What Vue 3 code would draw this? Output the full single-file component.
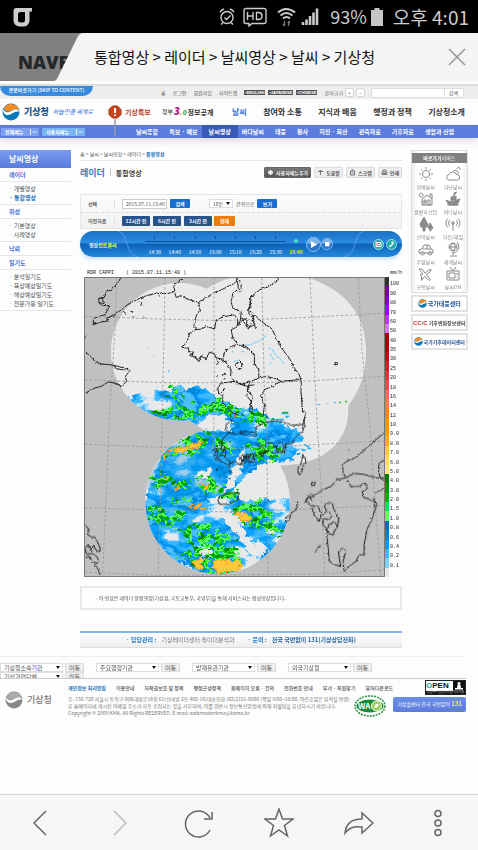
<script setup>
import { ref } from 'vue'

const observed = ref('2015.07.11.15:40')
const languages = ['ENGLISH', 'JAPANESE', 'CHINESE']
const utilities = ['홈', '로그인', '회원가입', '사이트맵']
const mainMenu = ['참여와 소통', '지식과 배움', '행정과 정책', '기상청소개']
const subMenu = ['날씨종합', '특보 · 예보', '날씨영상', '바다날씨', '태풍', '황사', '지진 · 화산', '관측자료', '기후자료', '생활과 산업']
const sideMenu = [
  { name: '레이더', items: ['개별영상', '통합영상'] },
  { name: '위성', items: ['기본영상', '사례영상'] },
  { name: '낙뢰', items: [] },
  { name: '일기도', items: ['분석일기도', '육상예상일기도', '해상예상일기도', '전문가용 일기도'] }
]
const crumbs = ['홈', '날씨', '날씨영상', '레이더']
const tools = [
  { name: '도움말', icon: 'M1 2.500h5M3.500 6V1M2 2.500 3.500 1 5 2.500' },
  { name: '스크랩', icon: 'M1.500 2h4v4h-4zM2.500 1h2v1M2.500 4h2' },
  { name: '인쇄', icon: 'M2 3V1h3v2M1 3h5v2.500H1zM2 4.500h3' }
]
const pastButtons = ['12시간 전', '6시간 전', '3시간 전']
const times = ['14:30', '14:40', '14:50', '15:00', '15:10', '15:20', '15:30', '15:40']
const services = [
  { name: '현재날씨', icon: 'M8 4.500a3.500 3.500 0 1 0 .1 0M8 1v2M8 13v2M1 8h2M13 8h2M3 3l1.500 1.500M11.500 11.500 13 13M3 13l1.500-1.500M11.500 4.500 13 3' },
  { name: '지난날씨', icon: 'M4 14a2.800 2.800 0 0 1 0-5.500 4 4 0 0 1 7.500 0 2.800 2.800 0 0 1 1 5.500zM8 5.500a2.500 2 0 0 1 4-.5 1.500 1.500 0 0 1 .5 2.800M12 3a1.500 1.500 0 1 1 2.500 1' },
  { name: '생활과산업', icon: 'M4 8l5-4 5 4v6H4zM6 9h2v2H6zM10 9h2v5h-2zM12 6V3h2v5M3 2a2 2 0 1 0 .1 0M4 11h5M4 13h5' },
  { name: '바다날씨', icon: 'M1 9l5 2 9-3-3 6H4zM6 10V6l5-1v4M9 5V2l3-1M2 14h12', fill: true },
  { name: '산악날씨', icon: 'M6 1 2 8l1 3h2v4h2v-4h2l1-2zM12 7l-2 4 1 2h1v2h1v-2l2-1z', fill: true },
  { name: '지진/해일', icon: 'M8 7v8M7 6h2v2H7zM5 4a4 4 0 0 0 0 6M11 4a4 4 0 0 1 0 6M3 2.500a6 6 0 0 0 0 9M13 2.500a6 6 0 0 1 0 9' },
  { name: '주말날씨', icon: 'M1 12V9l3-1 2-4h5l2 4 2 1v3zM5 8h8M9 4v4M4.500 10.500a1.800 1.800 0 1 0 .1 0M12 10.500a1.800 1.800 0 1 0 .1 0' },
  { name: '세계날씨', icon: 'M8 2a4 4 0 1 0 .1 0M4 6h8M8 2c-3 3-3 5 0 8M8 2c3 3 3 5 0 8M12 1c4 5 1 11-5 11M8 12v2M5 15h7' },
  { name: '공항날씨', icon: 'M1 3h3l3 4 4-3 2-.5-.5 2-4 3 4 5-1 1-5-4-3 4v-4L2 9l3-1z' },
  { name: '날씨ON', icon: 'M2 5h12v9H2zM4 7h6v5H4zM12 7v2M12 10.500v1M5 1l3 4 3-4' }
]
const banners = ['국가태풍센터', '기후변화정보센터', '국가기후데이터센터']
const scale = [
  ['#333', '100'], ['#7800aa', '90'], ['#8200d2', '80'], ['#a000ff', '70'], ['#b937ff', '60'], ['#d27dff', '50'],
  ['#aa0000', '40'], ['#b40000', '35'], ['#c80a14', '30'], ['#d21e28', '25'], ['#e1323c', '20'], ['#f04650', '18'],
  ['#ff6464', '16'], ['#ff7850', '14'], ['#ff8214', '12'], ['#ff9600', '10'], ['#ff9600', '9.0'], ['#ffaa1e', '8.0'],
  ['#ffc832', '7.0'], ['#ffdc50', '6.0'], ['#ffe678', '5.0'], ['#007800', '4.0'], ['#009600', '3.0'], ['#00b400', '2.0'],
  ['#00e65a', '1.5'], ['#5aff5a', '1.0'], ['#006eb4', '0.8'], ['#0082d2', '0.6'], ['#009bff', '0.4'], ['#3cb9ff', '0.2'],
  ['#78d2ff', '0.1'], ['#e8e8e8', '']
]
const agencies = ['기상청소속기관', '주요행정기관', '방재유관기관', '외국기상청', '기상과련단체']
const policies = ['이용안내', '저작권보호 및 정책', '행정근성정책', '홈페이지 오류 · 건의', '전화번호 안내', '부서 · 직원찾기', '뷰어다운로드']

/* Each map sheet keeps its own origin; its points are in thirds of a map unit. */
const coast = [
  { at: '75 266', lines: [
    '138,38 128,55 115,68 108,78 98,75 92,85 88,98 72,100 70,112 82,122 105,122 98,135 90,150 70,155 55,162 55,180 75,172 100,168 95,160 115,152 130,142 145,130 160,118 175,110 195,100 215,92 245,85 270,86 290,84 300,78 298,60 310,50 325,40',
    '300,84 305,98 318,92 330,98 345,105 372,112 390,100 400,95 420,82 440,75 465,62 480,55 490,40',
    '372,112 376,135 366,150 360,170 358,185 365,192 345,205 340,222 330,240 318,248 340,250 345,262 360,262 345,272 360,278 372,290 380,275 395,282 405,262 420,268 425,280 440,282 446,292 458,288',
    '358,195 380,193 395,185 420,192 425,165 450,155 480,150 490,165 488,185',
    '488,40 492,72 475,85 470,110 475,130 500,140 498,165 490,185 470,195 475,220 490,238',
    '540,92 525,100 528,120 520,135 535,145 540,180 528,186 515,182 518,165 500,160',
    '30,262 45,272 60,290 80,298 105,300 130,305 160,312 165,318 152,335 155,350 140,365 120,355 100,352 80,365 60,370 32,385',
    '115,303 125,312 160,318', '30,218 38,212', '70,102 82,98 86,115 72,114',
    '490,238 470,245 450,262 445,285 460,300 470,315 468,335 480,350 465,352 440,355 430,370 432,385 445,395 445,415 460,430 475,445 490,450',
    '490,238 510,248 530,258 540,270', '480,300 495,290 505,300 495,315 480,300', '480,350 500,360 520,365 540,360',
    '520,365 518,395 530,410 525,440 540,445', '192,110 202,116 198,123', '160,135 176,142', '207,156 209,158', '172,158 176,156', '148,142 154,146', '252,92 256,94',
    '424,333 428,335', '446,330 452,328', '448,345 452,340', '438,385 446,380 450,370', '425,300 432,294 428,288', '352,268 370,284 384,270'
  ] },
  { at: '240 266', lines: [
    '115,38 115,48 85,65 60,75 35,95 33,115 28,145 35,155 48,152 60,165 80,180 98,192 108,215 125,248 150,280 165,310 180,330 186,350 185,380 190,440 200,445 190,480',
    '0,180 10,163 18,180 27,193 40,165 46,180 48,192', '0,238 20,245 38,262 45,275 45,300 58,310 58,340 30,352 0,360',
    '58,340 80,335 110,342 125,350 180,345', '125,350 100,365 75,375 65,395 75,420 72,450 85,460',
    '30,352 25,375 38,395 35,420 40,435', '0,288 8,295 5,312 -5,312', '0,45 5,60 3,80', '287,294 293,292 296,298 289,301 287,294', '367,316 368,317'
  ] },
  { at: '75 420', lines: [
    '475,0 455,20 452,35 465,42 445,60 440,90 425,95 420,110 440,130 460,140 480,130 500,140 510,115 530,110',
    '465,42 485,48 510,38 540,42', '412,98 425,88 430,105 418,118 430,128', '430,70 450,85 445,105 432,115', '440,92 455,98 450,118', '455,120 468,132 460,150',
    '428,152 424,158', '462,155 470,165', '435,175 438,178', '495,115 505,130 520,110 526,130 540,112',
    '430,245 440,232 470,225 495,225 490,245 460,258 435,258 430,245',
    '30,320 40,332 38,350 60,360 70,375 75,390 75,400 65,400 55,380 50,400 40,380 30,390 35,410 50,405 65,415 72,430 60,440 70,455 75,472', '30,420 45,415 50,430 65,435'
  ] },
  { at: '240 420', lines: [
    '195,0 195,20 190,40 170,55 160,75 140,75 135,105 120,95 105,105 90,95 70,105 55,110 35,105 20,110 0,140',
    '0,45 25,50 50,52 50,25 80,10 120,8 160,20 193,18', '0,125 12,108 24,125 8,140', '25,120 40,108 48,130 30,132', '62,80 78,95 70,115 60,100', '110,78 125,70 135,80 128,105 112,98 110,78', '50,75 60,85 95,72 110,88',
    '190,110 198,120 200,135 190,145 188,160 180,170 175,155 182,140 188,125 190,110', '218,192 228,190 226,202 216,200 218,192', '327,95 330,96',
    '437,42 400,72 375,95 345,120 320,130 310,140 312,165 320,178 290,185 275,205 250,215 235,225 220,235 200,245 215,262 225,290 240,310 245,290 238,265 218,262',
    '250,290 262,280 255,262 270,252 280,258 285,275 298,300 295,325 280,350 265,345 262,330 250,320 252,300 268,305 278,295 270,280',
    '265,340 268,320 285,310 295,325', '262,345 268,400 270,430 285,440 305,445 300,420 298,400 310,390 320,400 312,430 315,460 330,445 350,430 360,410 375,410 375,380 385,330 400,300 405,280 415,262 405,250 370,235 370,220 385,210 378,195 355,205 335,205 325,185',
    '320,178 345,165 375,168 400,175 420,180 437,178', '437,125 420,135 418,160 425,180 437,188', '437,208 410,225', '175,250 170,275 155,285 150,305 140,312 137,300 150,290', '228,402 238,385 245,382',
    '195,255 210,230 218,250', '215,225 220,232', '402,240 412,255 404,268'
  ] }
]
const graticule = [
  { at: '75 266', lines: ['125,38 120,200 110,350 103,462 93,712 83,934', '271,38 267,250 262,462 258,662 250,934', '418,38 419,350 417,560', '30,155 270,163 440,167 565,163 710,157 930,145', '30,345 265,354 575,354 720,348 930,335'] },
  { at: '240 266', lines: ['67,38 75,380 82,462 86,934', '212,38 225,300 233,462 245,662 257,934', '358,38 368,250 390,462 408,712 425,934'] },
  { at: '75 420', lines: ['30,77 260,87 495,90 730,78 932,68', '30,268 215,275 495,282 745,270 932,262', '30,462 250,472 750,468 932,455'] }
]
const greens = [
  '160,460 166,449 185,440 200,437 215,439 228,444 236,449 232,458 220,456 215,446 200,452 195,462 180,456 170,461',
  '150,478 165,476 172,482 160,492 152,488', '172,484 190,486 186,492 174,491', '192,480 212,482 226,488 222,498 206,496 198,488',
  '170,502 190,500 194,504 172,506', '147,507 165,512 187,515 184,522 172,524 178,531 160,526 148,520',
  '182,531 208,527 225,537 238,553 243,568 236,577 212,577 192,566 182,556 196,549 186,542',
  '235,508 262,504 270,516 286,540 272,536 256,530 236,520', '148,415 165,408 182,410 206,407 222,402 240,410 238,419 215,414 192,421 168,421',
  '170,388 178,391 182,402 176,404 171,396', '232,406 241,411 244,424 234,420', '247,416 262,418 272,424 262,430 250,424', '246,450 262,444 286,452 276,464 258,464 246,458', '222,496 236,494 240,503 226,506'
]
const hot = [
  '213,563 220,560 230,564 240,560 241,570 236,575 216,574', '194,563 203,560 203,570 197,571', '163,456 168,453 165,461',
  '169,451 182,450 190,447 202,443 200,448 186,453 174,454', '202,486 211,488 206,491', '175,487 180,488 178,492', '235,515 247,516 252,523 242,522', '190,509 200,507 204,509', '165,478 169,479 167,482'
]
const gaps = [
  '237,497 250,484 266,471 284,464 293,500 250,502 240,503', '206,501 224,499 228,504 212,506', '223,495 234,470 240,456 246,448 244,466 232,490',
  '196,475 212,470 210,478 198,480', '228,508 236,520 262,556 254,562 240,540 224,522', '252,540 270,551 262,558', '176,563 188,568 192,572 182,571'
]
</script>

<template>
  <div class="device">
    <header class="status">
      <svg class="carrier" viewBox="0 0 20 20"><path d="M3.500 1H19v3.500h-2.500V14a6 6 0 0 1-6 5.500H6.500a6 6 0 0 1-6-6V4A3 3 0 0 1 3.500 1zm4 4A2.500 2.500 0 0 0 5 7.500V13a2.500 2.500 0 0 0 2.500 2.500h2A2.500 2.500 0 0 0 12 13V5z" fill="#ccc" fill-rule="evenodd" /></svg>
      <svg class="system" viewBox="0 0 102 20" fill="none" stroke="#ccc" stroke-width="1.400">
        <circle cx="9" cy="10.500" r="6" /><path d="M2 5a9 9 0 0 1 4-3M12 2a9 9 0 0 1 4 3M5 15.500l-2 2M13 15.500l2 2M6.500 10.500l2 2 4-4" />
        <path d="M28 1.500h18a2 2 0 0 1 2 2v11a2 2 0 0 1-2 2H34l-3 2.500v-2.500h-3a2 2 0 0 1-2-2v-11a2 2 0 0 1 2-2zM29.500 5v8M35 5v8M29.500 9H35M38.500 5.500v7h2.500q3-.5 3-3.500t-3-3.500z" />
        <path d="M60 5.500q8-7 17 0M62.500 8.500q6-5 12 0M65 11.500q3.500-3 7 0" stroke-width="2" /><path d="M66.500 14v5M65 17l1.500 2M70.500 19v-5M72 16l-1.500-2" stroke="#777" />
        <path d="M85 18v-3M88.500 18v-5.500M92 18v-9M95.500 18V5.500M99 18V1.500" stroke-width="2.600" />
      </svg>
      <span class="percent">93%</span>
      <svg class="battery" viewBox="0 0 12 18"><path d="M3.500 0h5v2H12v16H0V2h3.500z" fill="#c6c6c6" /></svg>
      <span class="clock">오후 4:01</span>
    </header>

    <div class="tabs">
      <div class="back-tab">NAVER</div>
      <svg class="slant" viewBox="0 0 30 48" preserveAspectRatio="none"><path d="M0 48C3 48 4 46 5 44L24 5C26 1 28 0 30 0V48z" fill="#f4f4f4" /></svg>
      <div class="front-tab"><h1>통합영상 &gt; 레이더 &gt; 날씨영상 &gt; 날씨 &gt; 기상청</h1>
        <button class="close" aria-label="탭 닫기"><svg viewBox="0 0 18 18"><path d="M1 1l16 16M17 1 1 17" fill="none" stroke="#999" stroke-width="1.600" /></svg></button>
      </div>
    </div>

    <div class="site">
      <div class="util">
        <a class="skip" href="#content">본문바로가기 (SKIP TO CONTENT)</a>
        <nav class="util-links"><a v-for="u in utilities" :key="u" href="#">{{ u }}</a></nav>
        <nav class="langs"><a v-for="l in languages" :key="l" href="#">▪{{ l }}</a></nav>
        <span class="sizes">글자크기 <button aria-label="글자 크게">+</button><button aria-label="글자 작게">−</button></span>
        <form class="search" @submit.prevent><input type="text" aria-label="검색어"><button>검색</button></form>
      </div>

      <div class="brand-row">
        <a class="brand" href="#">
          <svg class="globe" viewBox="0 0 18 18"><circle cx="9" cy="9" r="8.500" fill="#0878bd" /><path d="M2 5A8.500 8.500 0 0 1 17.500 8C14 4 10 8 7 8.500 4 9 2 7 2 5z" fill="#f58a1f" /><path d="M1 6c3 5 7 3 10 1 3-1.500 5-1 6.500 2C13 7 10 12 6 12 3 12 1 10 1 6z" fill="#fff" /></svg>
          <b>기상청</b><i>하늘만큼 세계로</i>
        </a>
        <a class="alert" href="#">
          <svg viewBox="0 0 14 32"><path d="M7 14v18" stroke="#99a" stroke-width="1.500" /><path d="M4.500 1h5L13 4.500v5L9.500 13h-5L1 9.500v-5z" fill="#c8431d" stroke="#a83412" /><path d="M7 3v5M7 9.500v1.500" stroke="#fff" stroke-width="2" /></svg>
          기상특보
        </a>
        <a class="open-info" href="#"><small>정부</small><span class="three"><b>3</b><i>.</i><em>0</em></span>정보공개</a>
        <nav class="main-menu"><a class="on" href="#">날씨</a><a v-for="m in mainMenu" :key="m" href="#">{{ m }}</a></nav>
      </div>

      <div class="blue-bar">
        <button class="drop all">전체메뉴 <svg viewBox="0 0 7 6"><path d="M.5 0v6M2.500 2 4.500 4l2-2" /></svg></button>
        <button class="drop mine">사용자메뉴 <svg viewBox="0 0 7 6"><path d="M.5 0v6M2.500 2 4.500 4l2-2" /></svg></button>
        <nav class="sub-menu"><a v-for="s in subMenu" :key="s" href="#" :class="{ on: s === '날씨영상' }">{{ s }}</a></nav>
      </div>

      <div class="columns">
        <aside class="side">
          <h2>날씨영상</h2>
          <section v-for="s in sideMenu" :key="s.name">
            <h3>{{ s.name }}</h3>
            <ul v-if="s.items.length"><li v-for="i in s.items" :key="i"><a href="#" :class="{ on: i === '통합영상' }">· {{ i }}</a></li></ul>
          </section>
        </aside>

        <main id="content" class="main">
          <p class="crumbs"><template v-for="c in crumbs" :key="c">{{ c }} &gt; </template><b>통합영상</b></p>
          <div class="title-row">
            <h2>레이더</h2><span class="bar"></span><h3>통합영상</h3>
            <div class="tools">
              <button class="dark"><svg viewBox="0 0 7 7"><path d="M3.500 1v5M1 3.500h5" stroke="#fff" stroke-width="1.800" /></svg>사용자메뉴추가</button>
              <button v-for="t in tools" :key="t.name"><svg viewBox="0 0 7 7"><path :d="t.icon" fill="none" stroke="#777" /></svg>{{ t.name }}</button>
            </div>
          </div>

          <form class="panel" @submit.prevent>
            <div class="line">
              <label class="name" for="when">선택</label>
              <input id="when" v-model="observed" type="text">
              <button class="go">검색</button>
              <span class="pick interval"><select id="step"><option>10분</option></select></span>
              <label for="step">간격으로</label>
              <button class="go">보기</button>
            </div>
            <div class="line past">
              <span class="name">이전자료</span>
              <button v-for="p in pastButtons" :key="p" type="button">{{ p }}</button>
              <button type="button" class="now">현재</button>
            </div>
          </form>

          <div class="player">
            <span class="player-name">영상<b>컨트롤러</b></span>
            <svg class="curve" viewBox="0 0 20 26" preserveAspectRatio="none"><path d="M0 0C12 3 6 24 20 26" fill="none" stroke="#65b0ee" stroke-width=".7" /></svg>
            <ol class="times"><li v-for="t in times" :key="t" :class="{ on: t === '15:40' }">{{ t }}</li></ol>
            <button class="round play" aria-label="재생"><svg viewBox="0 0 15 15"><circle cx="7.500" cy="7.500" r="7" fill="#2876cb" stroke="#8ec4f2" /><path d="M1 6a6.500 5.500 0 0 1 13 0q-6 3-13 0" fill="#7ab4e6" /><path d="M5 4v7l6-3.500z" fill="#fff" /></svg></button>
            <button class="round stop" aria-label="정지"><svg viewBox="0 0 15 15"><circle cx="7.500" cy="7.500" r="7" fill="#2876cb" stroke="#8ec4f2" /><path d="M1 6a6.500 5.500 0 0 1 13 0q-6 3-13 0" fill="#7ab4e6" /><path d="M5 5h5.500v5.500H5z" fill="#fff" /></svg></button>
            <svg class="curve right" viewBox="0 0 20 26" preserveAspectRatio="none"><path d="M0 26C14 24 8 3 20 0" fill="none" stroke="#65b0ee" stroke-width=".7" /></svg>
            <button class="round mini" aria-label="그림 저장"><svg viewBox="0 0 11 11"><circle cx="5.500" cy="5.500" r="5" fill="#20a9a8" stroke="#9ce5e0" /><path d="M3 3.500h5v4H3zM3 6l2-1 1 1 2-2" fill="none" stroke="#fff" /></svg></button>
            <button class="round mini" aria-label="도움말"><svg viewBox="0 0 11 11"><circle cx="5.500" cy="5.500" r="5" fill="#20a9a8" stroke="#9ce5e0" /><path d="M5.500 2.500h2v2.500l-3 3H3.500V6h2z" fill="#fff" /></svg></button>
          </div>

          <figure class="radar">
            <figcaption><span>RDR CAPPI</span><span>( 2015.07.11.15:40 )</span><span class="unit">mm/h</span></figcaption>
            <div class="map-row">
              <svg class="map" viewBox="84 278 302 301" role="img" aria-label="레이더 합성 강수 영상">
                <defs>
                  <filter id="rain" x="0" y="0" width="1" height="1" color-interpolation-filters="sRGB">
                    <feTurbulence type="fractalNoise" baseFrequency=".03 .055" numOctaves="5" seed="8" />
                    <feColorMatrix values="2.200 0 0 0 -.6  2.200 0 0 0 -.6  2.200 0 0 0 -.6  0 0 0 0 1" />
                    <feComponentTransfer result="tones">
                      <feFuncR type="discrete" tableValues=".91 .65 .26 .22 .05 .02 0 .1 .3" />
                      <feFuncG type="discrete" tableValues=".91 .87 .73 .71 .64 .61 .52 .62 .75" />
                      <feFuncB type="discrete" tableValues=".91 1 1 1 1 .97 .84 1 1" />
                    </feComponentTransfer>
                    <feTurbulence type="fractalNoise" baseFrequency=".2" numOctaves="2" result="edge" />
                    <feDisplacementMap in="SourceGraphic" in2="edge" scale="9" xChannelSelector="R" yChannelSelector="G" result="shape" />
                    <feComposite in="tones" in2="shape" operator="in" />
                  </filter>
                  <filter id="green" x="0" y="0" width="1" height="1" color-interpolation-filters="sRGB">
                    <feTurbulence type="fractalNoise" baseFrequency=".12 .16" numOctaves="3" seed="21" result="n" />
                    <feColorMatrix values="2.400 0 0 0 -.7  2.400 0 0 0 -.7  2.400 0 0 0 -.7  0 2.400 0 0 -.7" />
                    <feComponentTransfer result="tones">
                      <feFuncR type="discrete" tableValues="0 0 .35 .35 .1 0 0" />
                      <feFuncG type="discrete" tableValues=".62 .7 1 .98 .82 .7 .5" />
                      <feFuncB type="discrete" tableValues="0 0 .35 .35 .1 0 0" />
                      <feFuncA type="discrete" tableValues="0 0 0 1 1 1 1 1" />
                    </feComponentTransfer>
                    <feDisplacementMap in="SourceGraphic" in2="n" scale="22" xChannelSelector="R" yChannelSelector="G" result="shape" />
                    <feComposite in="tones" in2="shape" operator="in" />
                  </filter>
                  <filter id="ragged" x="-.1" y="-.1" width="1.200" height="1.200" color-interpolation-filters="sRGB">
                    <feTurbulence type="fractalNoise" baseFrequency=".22" numOctaves="2" seed="5" />
                    <feDisplacementMap in="SourceGraphic" scale="10" xChannelSelector="R" yChannelSelector="G" />
                  </filter>
                  <filter id="shore" x="0" y="0" width="1" height="1">
                    <feTurbulence type="fractalNoise" baseFrequency=".35" numOctaves="2" seed="3" />
                    <feDisplacementMap in="SourceGraphic" scale="3" xChannelSelector="R" yChannelSelector="G" />
                  </filter>
                  <clipPath id="cover">
                    <circle cx="180" cy="353" r="69" /><circle cx="218" cy="503.500" r="72.500" />
                    <path d="M207 290Q219 281 237 278H307Q366 297 367 352 367 385 349 407 351 440 323 457 304 467 282 467L250 470 205 432 180 415V300z" />
                  </clipPath>
                  <clipPath id="south"><circle cx="218" cy="503.500" r="72" /></clipPath>
                </defs>
                <path d="M84 278h302v301H84z" fill="#c0c0c0" />
                <g clip-path="url(#cover)">
                  <path d="M84 278h302v301H84z" fill="#e9e9e9" />
                  <g filter="url(#rain)">
                    <path d="M84 278h1v1h-1zM385 578h1v1h-1z" />
                    <path d="M122 402 143 394 160 391 172 393 175 386 188 390 196 386 207 391 216 398 218 403 230 403 240 410 250 409 260 415 274 420 287 427 300 434 308 446 296 458 284 465 270 462 256 470 242 482 232 496 H292V580H146V500L165 450 200 432 230 432 235 424 222 416 210 417 195 428H150z" />
                  </g>
                  <g clip-path="url(#south)"><path d="M145 465Q170 435 205 432L234 434 240 452 230 494 180 500 145 490z" fill="#008cdf" opacity=".3" /></g>
                  <g fill="#e9e9e9" filter="url(#ragged)"><polygon v-for="p in gaps" :key="p" :points="p" /></g>
                  <g filter="url(#green)"><path d="M84 278h1v1h-1zM385 578h1v1h-1z" /><polygon v-for="p in greens" :key="p" :points="p" /></g>
                  <g fill="#ffc83c" stroke="#ff9614" stroke-width="1" filter="url(#ragged)"><polygon v-for="p in hot" :key="p" :points="p" /></g>
                  <path d="M247 346h4l4-2 5-2 4-3 3-2M269 349l4 2 4 6 4 3 4 6M271 355l3 6M242 353h4M270 366l3-3M232 353h2M234 363l6-2M169 374v-4M148 349h1M153 358h1" fill="none" stroke="#5cc8f4" stroke-dasharray="3 1" />
                  <path d="M282 415h7M286 418h4M276 421h9M305 446l5 3M308 450h4" stroke="#28b4ff" stroke-width="1.500" /><path d="M283 414h6M287 419h1M340 404h2M346 403h2" stroke="#1bb432" stroke-width="1.500" />
                  <path d="M319 406h2M328 405h1M335 404h2" stroke="#1ca0f0" /><path d="M236 414v5" stroke="#f45020" stroke-width="1.500" />
                </g>
                <g fill="none" stroke="#989898" stroke-width="2.500" stroke-dasharray="8 6">
                  <g v-for="(g, n) in graticule" :key="n" :transform="`translate(${g.at}) scale(.33333)`"><polyline v-for="l in g.lines" :key="l" :points="l" /></g>
                </g>
                <g fill="none" stroke="#222" stroke-width="3" stroke-linejoin="round" filter="url(#shore)">
                  <g v-for="(g, n) in coast" :key="n" :transform="`translate(${g.at}) scale(.33333)`"><polyline v-for="l in g.lines" :key="l" :points="l" /></g>
                </g>
                <path d="M84.500 278.500h301v300h-301z" fill="none" stroke="#777" />
              </svg>
              <ul class="scale"><li v-for="s in scale" :key="s[1]"><i :style="{ background: s[0] }"></i><span>{{ s[1] }}</span></li></ul>
            </div>
          </figure>

          <p class="note">- 이 영상은 레이더 융합행정(기상청, 국토교통부, 국방부)을 통해 서비스되는 합성영상입니다.</p>
          <p class="contact"><b class="head">· 담당관리 :</b><span>기상레이더센터 레이더분석과</span><b class="head">· 문의 :</b><b>전국 국번없이 131(기상상담전화)</b></p>
        </main>

        <aside class="quick">
          <section>
            <h2><b>바로가기</b>서비스</h2>
            <div class="grid"><a v-for="s in services" :key="s.name" href="#"><svg viewBox="0 0 16 16"><path :d="s.icon" :fill="s.fill ? '#8a8a8a' : 'none'" stroke="#888" /></svg>{{ s.name }}</a></div>
          </section>
          <a v-for="(b, n) in banners" :key="b" class="banner" href="#">
            <span v-if="n === 1" class="ccic">CC<i>i</i>C</span>
            <svg v-else viewBox="0 0 18 18"><circle cx="9" cy="9" r="8.500" fill="#0878bd" /><path d="M2 5A8.500 8.500 0 0 1 17.500 8C14 4 10 8 7 8.500 4 9 2 7 2 5z" fill="#f58a1f" /><path d="M1 6c3 5 7 3 10 1 3-1.500 5-1 6.500 2C13 7 10 12 6 12 3 12 1 10 1 6z" fill="#fff" /></svg>
            <b :class="{ black: n === 1, tight: n > 0 }">{{ b }}</b>
          </a>
        </aside>
      </div>

      <footer>
        <div class="agencies">
          <form v-for="a in agencies" :key="a" @submit.prevent><span class="pick"><select :aria-label="a"><option>{{ a }}</option></select></span><button>이동</button></form>
        </div>
        <div class="foot">
          <div class="foot-brand"><svg viewBox="0 0 18 18"><circle cx="9" cy="9" r="8.500" fill="#888" /><path d="M2 5A8.500 8.500 0 0 1 17.500 8C14 4 10 8 7 8.500 4 9 2 7 2 5z" fill="#aaa" /><path d="M1 6c3 5 7 3 10 1 3-1.500 5-1 6.500 2C13 7 10 12 6 12 3 12 1 10 1 6z" fill="#fff" /></svg>기상청</div>
          <div class="foot-text">
            <nav><a class="first" href="#">개인정보 처리방침</a><a v-for="p in policies" :key="p" href="#">{{ p }}</a></nav>
            <div class="foot-row">
              <address>우. 156-720 서울시 동작구 여의대방로16길 61(신대방 2동 460-18)대표전화 (02)2181-0900 (평일 9:00~18:00, 야간휴일은 당직실 연결)<br>본 홈페이지에 게시된 이메일 주소가 자동 수집되는 것을 거부하며, 이를 위반시 정보통신망법에 의해 처벌됨을 유념하시기 바랍니다.<br>Copyright © 2009 KMA. All Rights RESERVED. E-mail: webmasterkma@korea.kr</address>
              <svg class="wa" viewBox="0 0 32 22"><ellipse cx="16" cy="11" rx="15" ry="10" fill="#fff" stroke="#2c8c3c" stroke-dasharray="2 1" stroke-width="1.500" /><ellipse cx="16" cy="11" rx="13.500" ry="6.500" fill="#168a35" /><circle cx="22.500" cy="11" r="5" fill="#9bd05a" stroke="#fff" /><path d="M20 13q1-5 5-4-1 4-5 4" fill="#fff" /><text x="4" y="14" fill="#fff" font-size="8" font-weight="700">WA</text></svg>
            </div>
          </div>
          <div class="foot-marks">
            <div class="open"><p><span><i>O</i>PEN</span><svg viewBox="0 0 12 10"><path d="M0 0h12v10H0z" fill="#111" /><circle cx="6" cy="2.500" r="1.500" fill="#fff" /><path d="M4.500 4h3l.5 3h2v1.500H2V7h2z" fill="#fff" /></svg></p><small>공공누리 공공저작물 자유이용</small></div>
            <p class="call">기상콜센터 전국 국번없이 <b>131</b></p>
          </div>
        </div>
      </footer>
    </div>

    <nav class="browser-bar">
      <button aria-label="뒤로"><svg viewBox="0 0 30 30"><path d="M21 3 9 15l12 12" /></svg></button>
      <button class="dim" aria-label="앞으로"><svg viewBox="0 0 30 30"><path d="M9 3l12 12L9 27" /></svg></button>
      <button aria-label="새로고침"><svg viewBox="0 0 30 30"><path d="M26 22A13 13 0 1 1 26 10M28 4v7h-8" /></svg></button>
      <button aria-label="즐겨찾기"><svg viewBox="0 0 30 30"><path d="M15 1l3.500 10H29l-8.500 6.500 3 10.500L15 22l-8.500 6 3-10.500L1 11h10.500z" /></svg></button>
      <button aria-label="공유"><svg viewBox="0 0 30 30"><path d="M1 25C2 15 8 11 18 11V5l11 10-11 10v-6C9 18 5 20 1 25z" /></svg></button>
      <button aria-label="더보기"><svg viewBox="0 0 30 30"><circle cx="15" cy="5.500" r="3" /><circle cx="15" cy="15" r="3" /><circle cx="15" cy="24.500" r="3" /></svg></button>
    </nav>
  </div>
</template>

<style>
body { margin: 0; background: #fdfdfd; }
</style>

<style scoped>
* { box-sizing: border-box; }
.device { display: flex; flex-direction: column; min-height: 100vh; font: 5px/7px "Noto Sans CJK KR", "Noto Sans", sans-serif; color: #555; }
.device h1, .device h2, .device h3, .device p, .device ul, .device ol, .device figure { margin: 0; padding: 0; list-style: none; }
button, input, select { margin: 0; padding: 0; border: 0; border-radius: 0; background: none; font: inherit; color: inherit; appearance: none; outline: none; }
a { color: inherit; text-decoration: none; white-space: nowrap; }
svg { display: block; }
address { font-style: normal; }

.status { display: flex; align-items: center; height: 33px; padding: 0 9px 0 13px; background: #000; color: #ccc; font-size: 19px; line-height: 33px; }
.carrier { width: 20px; height: 20px; }
.system { width: 102px; height: 20px; margin-left: auto; }
.percent { margin-left: 10px; font-size: 18px; }
.battery { width: 12px; height: 18px; margin: 0 10px 0 4px; }

.tabs { display: flex; height: 48px; margin-bottom: 3px; background: #808080; }
.back-tab { width: 53px; padding-left: 18px; font: 800 18px/58px "Open Sans", sans-serif; color: #22282c; }
.slant { position: relative; width: 30px; height: 48px; }
.front-tab { position: relative; display: flex; flex: 1; align-items: center; justify-content: space-between; padding: 0 12px 0 11px; background: #f4f4f4; }
.front-tab h1 { font-size: 15px; font-weight: 400; line-height: 24px; color: #111; white-space: nowrap; }
.close svg { width: 18px; height: 18px; }

.site { flex: 1; }
.util { display: flex; align-items: center; height: 15px; padding-right: 14px; border-top: 2px solid #dedede; background: #eee; }
.skip { align-self: flex-start; width: 93px; height: 10px; border-radius: 0 0 12px 12px; background: #368be0; color: #fff; font-weight: 500; line-height: 8px; text-align: center; }
.util-links { display: flex; gap: 7px; margin-left: 68px; }
.langs { display: flex; gap: 3px; margin-left: 7px; font: 700 4px/5px "Liberation Sans", sans-serif; }
.langs a { padding: 0 1px; background: #555; color: #fff; }
.sizes { display: flex; align-items: center; gap: 2px; margin-left: auto; }
.sizes button { width: 9px; height: 9px; border: 1px solid #d5d5d5; border-radius: 2px; background: #fff; line-height: 6px; }
.search { display: flex; align-items: center; width: 93px; height: 10px; margin-left: 6px; border: 1px solid #ddd; border-radius: 2px; background: #fff; }
.search input { flex: 1; min-width: 0; height: 8px; }
.search button { padding: 0 5px 0 4px; border-left: 1px solid #ddd; line-height: 7px; }

.brand-row { display: flex; align-items: center; height: 26px; padding: 0 13px 0 2px; font-size: 8px; font-weight: 700; line-height: 12px; color: #333; white-space: nowrap; }
.brand { display: flex; align-items: center; width: 106px; gap: 4px; color: #17528f; }
.brand b { font-size: 9px; }
.brand i { font-size: 6px; font-weight: 400; color: #2d6ae0; }
.globe { width: 18px; height: 18px; }
.alert { display: flex; align-items: center; gap: 3px; width: 54px; height: 26px; font-size: 7px; color: #b84026; }
.alert svg { position: relative; z-index: 1; width: 14px; height: 32px; margin-top: 18px; }
.open-info { display: flex; align-items: center; width: 70px; font-size: 7px; gap: 1px; }
.open-info small { font-size: 6px; font-weight: 400; }
.three { display: flex; font: italic 700 10px/12px "Open Sans", sans-serif; }
.three b { color: #b5228e; } .three i { color: #f49b1a; } .three em { font-size: 7px; line-height: 15px; color: #35a54a; }
.main-menu { display: flex; flex: 1; justify-content: space-between; }
.main-menu .on { color: #3b6fe0; }

.blue-bar { display: flex; align-items: center; height: 13px; padding: 0 24px 0 1px; background: #5b7cdd; color: #fff; font-size: 6px; font-weight: 700; line-height: 8px; box-shadow: 0 3px 7px #ddd; }
.drop { display: flex; align-items: center; justify-content: space-between; height: 8px; padding: 0 2px 0 4px; border-radius: 1px; font-size: 5px; line-height: 7px; white-space: nowrap; }
.drop svg { width: 7px; height: 6px; fill: none; stroke: #fff; stroke-width: .8; }
.all { width: 38px; background: #7da0f0; }
.mine { width: 43px; margin-left: 3px; background: #78b4f2; }
.sub-menu { display: flex; flex: 1; justify-content: space-between; margin-left: 51px; line-height: 13px; }
.sub-menu .on { margin: 0 -7px; padding: 0 7px; background: #365ab5; }

.columns { display: grid; grid-template-columns: 71px minmax(0, 1fr) 55px; column-gap: 9px; align-items: start; padding: 12px 12px 0 0; }
.side h2 { height: 18px; padding-left: 9px; background: linear-gradient(#7b9af0, #597bdc); color: #fff; font-size: 8px; line-height: 17px; }
.side h3 { height: 14px; padding-left: 9px; border-bottom: 1px solid #e6e6e6; color: #4a70dc; font-size: 6px; line-height: 13px; }
.side ul { padding: 2px 0 2px 9px; border-bottom: 1px solid #e6e6e6; font-size: 6px; line-height: 9px; }
.side li { height: 9px; }
.side .on { color: #2470b5; font-weight: 700; }

.crumbs { height: 11px; border-bottom: 1px solid #e8e8e8; line-height: 8px; white-space: nowrap; }
.crumbs b { color: #2470b5; }
.title-row { display: flex; align-items: center; height: 23px; }
.title-row h2 { color: #2b80c8; font-size: 9px; line-height: 14px; }
.title-row h3 { color: #444; font-size: 7px; line-height: 14px; }
.bar { width: 1px; height: 7px; margin: 0 5px; background: #ccc; }
.tools { display: flex; gap: 3px; margin-left: auto; font-weight: 700; }
.tools button { display: flex; align-items: center; gap: 2px; height: 11px; padding: 0 2px; border: 1px solid #ddd; border-radius: 1px; background: #eee; white-space: nowrap; line-height: 9px; }
.tools svg { width: 7px; height: 7px; }
.tools .dark { background: linear-gradient(#777, #555); border-color: #666; color: #eee; }

.panel { margin-top: 10px; border: 1px solid #e6e6e6; background: linear-gradient(#fcfcfc, #f1f1f1); }
.line { display: flex; align-items: center; gap: 3px; height: 17px; padding-left: 7px; }
.past { height: 16px; border-top: 1px dashed #ddd; font-weight: 700; }
.name { width: 27px; border-right: 1px solid #ddd; margin-right: 4px; color: #444; font-weight: 500; line-height: 7px; }
.line input { width: 45px; height: 10px; padding-left: 3px; border: 1px solid #ccc; background: #fff; }
.go { width: 20px; height: 9px; border-radius: 1px; background: #176dd0; color: #fff; font-weight: 700; line-height: 8px; }
.pick { position: relative; display: inline-block; width: 63px; height: 9px; }
.pick::after { content: ""; position: absolute; top: 3px; right: 3px; border: 2px solid transparent; border-top: 3px solid #111; border-bottom: 0; pointer-events: none; }
.pick select { display: block; width: 100%; height: 100%; padding-left: 3px; border: 1px solid #ddd; background: #fff; line-height: 7px; }
.interval { width: 24px; margin-left: 16px; }
.past button { width: 28px; height: 10px; border-radius: 1px; background: #27528c; color: #fff; line-height: 9px; }
.past .now { width: 21px; margin-left: -1px; background: #ed7d0b; }

.player { display: flex; align-items: center; height: 26px; margin-top: 2px; padding: 0 3px 0 9px; border-radius: 13px; background: linear-gradient(#1a70c4, #2b8ae0 45%, #0e62b7 52%, #2389df); box-shadow: 0 3px 3px #d4e8f8; color: #fff; }
.player-name { color: #fff; font-weight: 700; white-space: nowrap; }
.player-name b { color: #c8f03c; }
.curve { width: 20px; height: 26px; margin-left: 1px; }
.times { display: flex; flex: 1; height: 18px; }
.device .times { margin: 5px 0 3px 7px; }
.times li { flex: 1; height: 100%; padding-top: 11px; text-align: center; line-height: 9px; background: linear-gradient(#105298, #105298) center 0 / 1px 3px no-repeat, linear-gradient(#0d4c94, #0d4c94) 0 5px / 100% 1px no-repeat; }
.times .on { color: #e3f000; font-weight: 700; background: radial-gradient(circle 2px at 50% 5px, #41dfc8 90%, transparent); }
.round svg { display: block; width: 100%; height: 100%; }
.play { width: 15px; height: 15px; } .stop { width: 12px; height: 12px; }
.right { margin: 0 9px 0 11px; }
.mini { width: 11px; height: 11px; margin-right: 2px; }

.device .radar { margin: 12px 0 0; padding-left: 4px; font-family: "Liberation Mono", monospace; color: #222; }
figcaption { display: flex; gap: 12px; height: 8px; padding-left: 3px; line-height: 8px; white-space: pre; }
.unit { margin-left: auto; }
.map-row { display: flex; }
.map { flex: 1; min-width: 0; }
.scale { display: flex; flex-direction: column; width: 17px; }
.scale li { display: flex; flex: 1; align-items: flex-end; gap: 1px; height: 0; }
.scale i { width: 4px; height: 100%; }
.scale span { line-height: 4px; }

.device .note { margin-top: 9px; padding: 6px 14px; border: 2px solid #e8e8e8; line-height: 8px; }
.device .contact { display: flex; justify-content: center; gap: 5px; height: 17px; margin-top: 21px; border-top: 2px solid #82b4ee; border-bottom: 1px solid #ddd; background: linear-gradient(#fdfdfd, #eee); font-size: 6px; line-height: 14px; color: #2a67a5; white-space: nowrap; }
.contact span { color: #777; margin-right: 8px; }
.contact .head { color: #277ed1; }

.quick { display: grid; gap: 2px; }
.quick section { padding: 2px 0 1px; border: 1px solid #ddd; background: linear-gradient(90deg, #eee, #fff 10% 90%, #eee); }
.quick h2 { height: 10px; background: #808080; color: #fff; font-size: 5px; font-weight: 400; line-height: 9px; text-align: center; }
.grid { display: grid; grid-template-columns: 1fr 1fr; padding-top: 3px; }
.grid a { display: grid; justify-items: center; height: 25px; color: #888; }
.grid svg { width: 16px; height: 16px; }
.banner { display: flex; align-items: center; justify-content: center; gap: 1px; height: 17px; border: 2px solid #e3e3e3; background: #fff; color: #22549a; font-size: 6px; }
.banner svg { width: 9px; height: 9px; }
.banner .tight { font-size: 5px; }
.banner .black { color: #444; }
.ccic { color: #d93a35; font: 700 6px/8px "Liberation Sans", sans-serif; } .ccic i { color: #35a547; }

footer { margin: 8px 12px 0 0; padding-top: 6px; border-top: 1px solid #eee; }
.agencies { display: flex; flex-wrap: wrap; gap: 0 12px; height: 15px; overflow: hidden; font-size: 6px; }
.agencies form { display: flex; gap: 2px; height: 9px; }
.agencies button { width: 19px; border: 1px solid #ddd; background: #eee; line-height: 7px; }
.foot { display: flex; border-top: 1px solid #ccc; }
.foot-brand { display: flex; align-items: center; gap: 4px; width: 68px; height: 41px; padding-left: 5px; font-size: 9px; line-height: 12px; font-weight: 500; color: #777; }
.foot-brand svg { width: 18px; height: 18px; }
.foot-text { flex: 1; min-width: 0; padding-top: 5px; }
.foot-text nav { display: flex; gap: 10px; font-weight: 500; }
.foot-text .first { color: #2470b5; font-weight: 700; }
.foot-row { display: flex; margin-top: 4px; white-space: nowrap; }
.foot-row address { width: 286px; color: #777; line-height: 7px; }
.wa { flex: none; width: 32px; height: 22px; }
.foot-marks { display: flex; flex: none; flex-direction: column; align-items: flex-end; width: 73px; margin-left: -10px; padding-top: 1px; }
.open { width: 41px; border: 1px solid #222; background: #111; }
.open p { display: flex; justify-content: space-between; height: 10px; background: #fff; color: #111; font: 700 8px/10px "Liberation Sans", sans-serif; }
.open i { color: #26a69a; font-style: normal; } .open svg { width: 12px; height: 10px; }
.open small { display: block; color: #ccc; font-size: 3px; line-height: 3px; text-align: center; }
.call { width: 73px; height: 15px; border-radius: 2px; background: linear-gradient(#6c8fe8, #5b7cdd); color: #fff; line-height: 14px; text-align: center; white-space: nowrap; }
.foot-marks .call { margin-top: 2px; }
.call b { color: #e0f04a; font-size: 6px; }

.browser-bar { display: flex; align-items: center; height: 56px; border-top: 1px solid #d5d5d5; background: #f6f6f6; }
.browser-bar button { display: flex; flex: 1; justify-content: center; }
.browser-bar svg { width: 30px; height: 30px; fill: none; stroke: #666; stroke-width: 1.500; }
.browser-bar .dim svg { stroke: #bbb; }
</style>
